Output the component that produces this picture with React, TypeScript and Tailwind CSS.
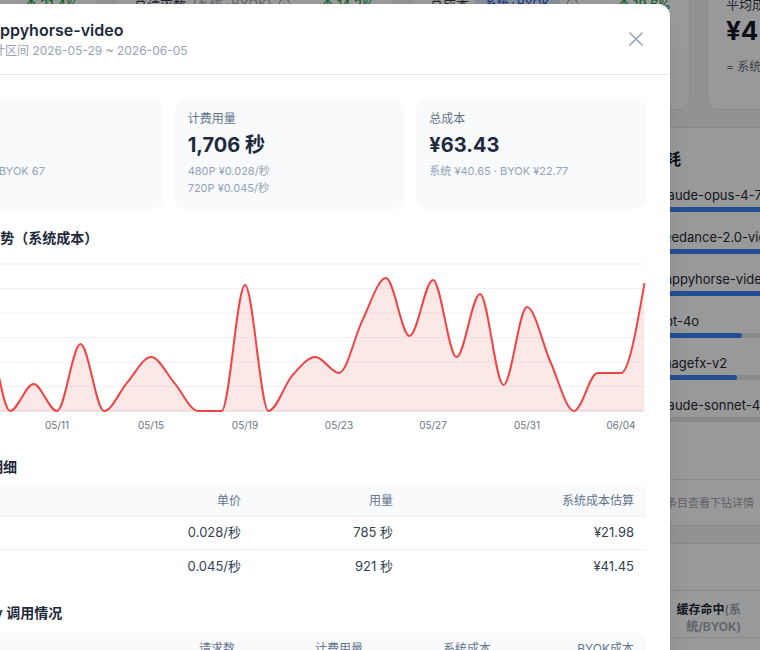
import { X, Info, Video } from 'lucide-react';

const values = [
  2.44, 6.12, 0, 2.2, 0, 5.46, 0, 2.36, 4.4, 2.28, 0, 0, 10.28, 0, 2.86, 4.4, 3.1, 7.42, 10.86, 6.12, 10.7, 4.4,
  9.56, 2.12, 8.48, 4.0, 0, 3.1, 3.1, 10.44,
];

const labels = Array.from({ length: 30 }, (_, i) => {
  const d = 7 + i;
  return d <= 31 ? `05/${String(d).padStart(2, '0')}` : `06/${String(d - 31).padStart(2, '0')}`;
});

const stats = [
  { title: '总调用次数', trend: '21.4%', value: '1,284', sub: '系统 812 · BYOK 472' },
  { title: '总请求数', hint: '(系统+BYOK)', trend: '14.2%', value: '2,931', sub: '较上一周期 +364' },
  { title: '总成本', pill: '系统+BYOK', trend: '19.6%', value: '¥1,326.58', sub: '系统 ¥842.10 · BYOK ¥484.48' },
  { title: '平均成本 / 请求', trend: '3.1%', value: '¥45.26', sub: '= 系统成本 ÷ 请求数' },
];

const models = [
  { name: 'claude-opus-4-7', pct: 100, cost: '¥412.30' },
  { name: 'seedance-2.0-video', pct: 92, cost: '¥378.12' },
  { name: 'happyhorse-video', pct: 86, cost: '¥352.40' },
  { name: 'gpt-4o', pct: 35.6, cost: '¥146.88' },
  { name: 'imagefx-v2', pct: 34.2, cost: '¥140.02' },
  { name: 'claude-sonnet-4-5', pct: 12, cost: '¥49.36' },
];

// d3 curveMonotoneX
function monotonePath(pts: [number, number][]) {
  const n = pts.length;
  const s: number[] = [];
  for (let i = 0; i < n - 1; i++) s.push((pts[i + 1][1] - pts[i][1]) / (pts[i + 1][0] - pts[i][0]));
  const t: number[] = new Array(n).fill(0);
  for (let i = 1; i < n - 1; i++) {
    const h0 = pts[i][0] - pts[i - 1][0];
    const h1 = pts[i + 1][0] - pts[i][0];
    const s0 = s[i - 1];
    const s1 = s[i];
    const p = (s0 * h1 + s1 * h0) / (h0 + h1);
    const sg = (v: number) => (v < 0 ? -1 : 1);
    t[i] = (sg(s0) + sg(s1)) * Math.min(Math.abs(s0), Math.abs(s1), 0.5 * Math.abs(p)) || 0;
  }
  t[0] = (3 * s[0] - t[1]) / 2;
  t[n - 1] = (3 * s[n - 2] - t[n - 2]) / 2;
  let d = `M${pts[0][0]},${pts[0][1]}`;
  for (let i = 0; i < n - 1; i++) {
    const [x0, y0] = pts[i];
    const [x1, y1] = pts[i + 1];
    const dx = (x1 - x0) / 3;
    d += `C${x0 + dx},${y0 + dx * t[i]} ${x1 - dx},${y1 - dx * t[i + 1]} ${x1},${y1}`;
  }
  return d;
}

function TrendChart() {
  const W = 713;
  const H = 182;
  const L = 30;
  const R = 711.5;
  const T = 12;
  const B = 159;
  const x = (i: number) => L + (i * (R - L)) / 29;
  const y = (v: number) => B - (v / 12) * (B - T);
  const pts = values.map((v, i) => [x(i), y(v)] as [number, number]);
  const line = monotonePath(pts);
  const area = `${line}L${R},${B}L${L},${B}Z`;

  return (
    <svg width={W} height={H} className="mt-1 block">
      {[0, 2, 4, 6, 8, 10, 12].map((v) => (
        <g key={v}>
          <line x1={L} x2={R} y1={y(v)} y2={y(v)} stroke={v === 0 ? '#d4d7dd' : '#eef1f5'} strokeWidth={1} />
          <text x={L - 6} y={y(v) + 3} textAnchor="end" fontSize={10} fill="#6b7280">
            ¥{v}
          </text>
        </g>
      ))}
      <path d={area} fill="#ef4444" fillOpacity={0.12} />
      <path d={line} fill="none" stroke="#ef4444" strokeWidth={2} />
      {labels.map((lb, i) =>
        i % 4 === 0 ? (
          <text key={lb} x={x(i)} y={177} textAnchor="middle" fontSize={10} fill="#6b7280">
            {lb}
          </text>
        ) : null,
      )}
    </svg>
  );
}

export default function App() {
  return (
    <div className="relative h-[650px] w-[760px] overflow-hidden bg-[#f3f4f6] font-[Inter,'Noto_Sans_CJK_SC',sans-serif]">
      {/* dashboard behind the dialog */}
      <div className="ml-[-181px] mt-[-27px] w-[1167px]">
        <div className="flex gap-[17px]">
          {stats.map((s) => (
            <div
              key={s.title}
              className="h-[137px] w-[279px] shrink-0 rounded-xl border border-[#e5e7eb] bg-white px-[18px] py-5"
            >
              <div className="flex h-5 items-center justify-between text-[13px] leading-5">
                <div className="flex items-center gap-1.5 text-[#374151]">
                  <span>{s.title}</span>
                  {s.hint && <span className="text-[#9ca3af]">{s.hint}</span>}
                  {s.pill && (
                    <span className="rounded-full bg-[#dbeafe] px-2.5 text-xs leading-5 text-[#1d4ed8]">{s.pill}</span>
                  )}
                  <Info size={13} className="text-[#9ca3af]" />
                </div>
                <span className="font-medium text-[#16a34a]">↑ {s.trend}</span>
              </div>
              <div className="mt-px text-[26px] font-bold leading-8 text-[#111827]">{s.value}</div>
              <div className="mt-[11px] text-xs leading-[18px] text-[#6b7280]">{s.sub}</div>
            </div>
          ))}
        </div>

        <div className="mt-[17px] flex gap-[17px]">
          <div className="h-[399px] w-[764px] shrink-0 rounded-xl border border-[#e5e7eb] bg-white" />
          <div className="w-[386px] shrink-0 rounded-xl border border-[#e5e7eb] bg-white">
            <div className="px-4 pt-5">
              <div className="text-base font-semibold leading-[22px] text-[#111827]">模型消耗</div>
              <div className="mt-4 flex flex-col gap-4">
                {models.map((m, i) => (
                  <div key={m.name}>
                    <div className="flex items-center text-[13px] leading-[18px]">
                      <span className="w-[28px] text-xs text-[#9ca3af]">#{i + 1}</span>
                      <span className="ml-3 flex-1 text-[#1f2937]">{m.name}</span>
                      <span className="text-[#374151]">{m.cost}</span>
                    </div>
                    <div className="mt-[3px] h-[5px] rounded-full bg-[#e5e7eb]">
                      <div className="h-[5px] rounded-full bg-[#3b82f6]" style={{ width: `${m.pct}%` }} />
                    </div>
                  </div>
                ))}
              </div>
            </div>
            <div className="mt-[57px] border-t border-[#e5e7eb] pb-[13px] pl-[21px] pr-4 pt-[15px] text-[11px] leading-[17px] text-[#9ca3af]">
              点击任意条目查看下钻详情
            </div>
          </div>
        </div>

        <div className="mt-[17px] h-[200px] rounded-xl border border-[#e5e7eb] bg-white">
          <div className="flex h-[46px] items-center px-5 text-base font-semibold text-[#111827]">模型明细</div>
          <div className="grid grid-cols-[1fr_110px_110px_110px_90px_108px_108px] border-y border-[#e5e7eb] px-4 pb-[2px] pt-[10px] text-xs font-semibold leading-[17px] text-[#1f2937]">
            <div className="px-3">模型</div>
            <div className="px-3 text-right">请求数</div>
            <div className="px-3 text-right">输入 Token</div>
            <div className="px-3 text-right">输出 Token</div>
            <div className="px-3 text-right">
              缓存命中<span className="text-[#9ca3af]">(系统/BYOK)</span>
            </div>
            <div className="px-3 text-right">系统成本</div>
            <div className="px-3 text-right">BYOK成本</div>
          </div>
        </div>
      </div>

      <div className="absolute inset-0 bg-black/40" />

      {/* dialog */}
      <div className="absolute left-[-91px] top-[4px] w-[761px] rounded-xl bg-white shadow-xl">
        <div className="flex items-center justify-between border-b border-[#e2e8f0] px-6 pb-[15px] pt-[15px]">
          <div className="flex items-center gap-3">
            <div className="flex h-9 w-9 items-center justify-center rounded-lg bg-[#fef2f2] text-[#ef4444]">
              <Video size={18} />
            </div>
            <div>
              <div className="text-base font-semibold leading-[22px] text-[#1e293b]">happyhorse-video</div>
              <div className="mt-0.5 text-xs leading-4 text-[#94a3b8]">统计区间 2026-05-29 ~ 2026-06-05</div>
            </div>
          </div>
          <button className="mr-[-2px] flex h-6 w-6 items-center justify-center text-[#94a3b8]">
            <X size={24} strokeWidth={1.5} />
          </button>
        </div>

        <div className="px-6 pb-6 pt-6">
          <div className="grid grid-cols-3 gap-3">
            <div className="rounded-[10px] bg-[#f8fafc] px-[13px] py-3">
              <div className="text-xs leading-4 text-[#64748b]">请求数</div>
              <div className="mt-1 text-xl font-bold leading-7 text-[#1e293b]">170</div>
              <div className="mt-1 text-[11px] leading-[17px] text-[#94a3b8]">系统 103 · BYOK 67</div>
            </div>
            <div className="rounded-[10px] bg-[#f8fafc] px-[13px] py-3">
              <div className="text-xs leading-4 text-[#64748b]">计费用量</div>
              <div className="mt-1 text-xl font-bold leading-7 text-[#1e293b]">1,706 秒</div>
              <div className="mt-1 text-[11px] leading-[17px] text-[#94a3b8]">480P ¥0.028/秒</div>
              <div className="text-[11px] leading-[17px] text-[#94a3b8]">720P ¥0.045/秒</div>
            </div>
            <div className="rounded-[10px] bg-[#f8fafc] px-[13px] py-3">
              <div className="text-xs leading-4 text-[#64748b]">总成本</div>
              <div className="mt-1 text-xl font-bold leading-7 text-[#1e293b]">¥63.43</div>
              <div className="mt-1 text-[11px] leading-[17px] text-[#94a3b8]">系统 ¥40.65 · BYOK ¥22.77</div>
            </div>
          </div>

          <div className="mt-[19px] text-sm font-semibold leading-5 text-[#1e293b]">近 30 天趋势（系统成本）</div>
          <TrendChart />

          <div className="mt-[23px] text-sm font-semibold leading-5 text-[#1e293b]">按分辨率明细</div>
          <div className="mt-2">
            <div className="grid h-8 grid-cols-[1fr_152px_152px_241px] items-center rounded-t-lg border-b border-[#eef2f7] bg-[#f8fafc] text-xs text-[#64748b]">
              <div className="px-3">分辨率</div>
              <div className="px-3 text-right">单价</div>
              <div className="px-3 text-right">用量</div>
              <div className="px-3 text-right">系统成本估算</div>
            </div>
            <div className="grid h-[33px] grid-cols-[1fr_152px_152px_241px] items-center border-b border-[#eef2f7] text-[13px] text-[#334155]">
              <div className="px-3">480P</div>
              <div className="px-3 text-right">0.028/秒</div>
              <div className="px-3 text-right">785 秒</div>
              <div className="px-3 text-right">¥21.98</div>
            </div>
            <div className="grid h-[33px] grid-cols-[1fr_152px_152px_241px] items-center text-[13px] text-[#334155]">
              <div className="px-3">720P</div>
              <div className="px-3 text-right">0.045/秒</div>
              <div className="px-3 text-right">921 秒</div>
              <div className="px-3 text-right">¥41.45</div>
            </div>
          </div>

          <div className="mt-5 text-sm font-semibold leading-5 text-[#1e293b]">按 API Key 调用情况</div>
          <div className="mt-2.5">
            <div className="grid h-8 grid-cols-[1fr_128px_128px_128px_143px] items-center rounded-t-lg border-b border-[#eef2f7] bg-[#f8fafc] text-xs text-[#64748b]">
              <div className="px-3">来源</div>
              <div className="px-3 text-right">请求数</div>
              <div className="px-3 text-right">计费用量</div>
              <div className="px-3 text-right">系统成本</div>
              <div className="px-3 text-right">BYOK成本</div>
            </div>
            <div className="grid h-[33px] grid-cols-[1fr_128px_128px_128px_143px] items-center border-b border-[#eef2f7] text-[13px] text-[#334155]">
              <div className="px-3">系统</div>
              <div className="px-3 text-right">103</div>
              <div className="px-3 text-right">1,092 秒</div>
              <div className="px-3 text-right">¥40.65</div>
              <div className="px-3 text-right">-</div>
            </div>
            <div className="grid h-[33px] grid-cols-[1fr_128px_128px_128px_143px] items-center text-[13px] text-[#334155]">
              <div className="px-3">BYOK</div>
              <div className="px-3 text-right">67</div>
              <div className="px-3 text-right">614 秒</div>
              <div className="px-3 text-right">-</div>
              <div className="px-3 text-right">¥22.77</div>
            </div>
          </div>
        </div>
      </div>
    </div>
  );
}
